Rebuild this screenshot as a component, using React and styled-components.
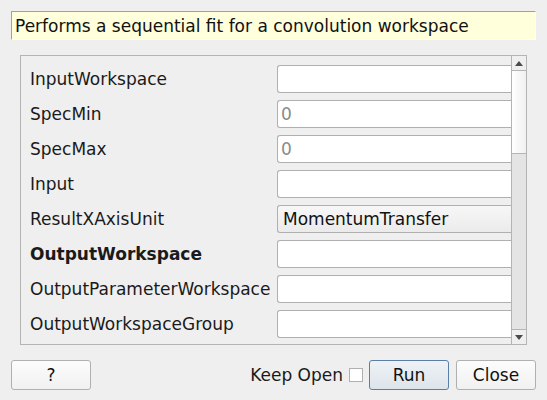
import React from "react";
import styled, { createGlobalStyle } from "styled-components";

const Global = createGlobalStyle`
  html, body {
    margin: 0;
    padding: 0;
    background: #efefef;
  }
  body {
    font-family: "DejaVu Sans", "Liberation Sans", sans-serif;
    font-size: 17px;
    color: #1a1a1a;
  }
`;

const Dialog = styled.div`
  width: 547px;
  height: 400px;
  box-sizing: border-box;
  padding: 11px 11px 10px 11px;
  display: flex;
  flex-direction: column;
`;

const Description = styled.div`
  height: 29px;
  box-sizing: border-box;
  background: #ffffdc;
  border-top: 1px solid #a0a0a0;
  border-left: 1px solid #a0a0a0;
  border-bottom: 1px solid #ffffff;
  border-right: 1px solid #ffffff;
  padding: 0 4px 0 3px;
  display: flex;
  align-items: center;
  white-space: nowrap;
  color: #111;
`;

const Panel = styled.div`
  margin: 15px 9px 0 9px;
  height: 290px;
  box-sizing: border-box;
  border: 1px solid #b4b4b4;
  display: flex;
  overflow: hidden;
`;

const Form = styled.div`
  flex: 1;
  padding: 9px 0 0 9px;
  display: flex;
  flex-direction: column;
  gap: 7px;
  overflow: hidden;
`;

const Row = styled.div`
  display: grid;
  grid-template-columns: 247px 1fr;
  align-items: center;
  height: 28px;
  flex-shrink: 0;
`;

const Label = styled.div`
  font-weight: ${(p) => (p.$bold ? "bold" : "normal")};
  white-space: nowrap;
`;

const Field = styled.div`
  height: 28px;
  box-sizing: border-box;
  border: 1px solid #b0b0b0;
  border-right: none;
  border-radius: 3px 0 0 3px;
  background: ${(p) =>
    p.$combo ? "linear-gradient(#f7f7f7, #ebebeb)" : "#ffffff"};
  color: ${(p) => (p.$placeholder ? "#8a8a8a" : "#111")};
  padding-left: ${(p) => (p.$combo ? "5px" : "3px")};
  display: flex;
  align-items: center;
  white-space: nowrap;
`;

const ScrollBar = styled.div`
  width: 14px;
  border-left: 1px solid #b4b4b4;
  display: flex;
  flex-direction: column;
  background: #e4e4e4;
`;

const Arrow = styled.div`
  height: 14px;
  background: #efefef;
  display: flex;
  align-items: center;
  justify-content: center;
  border-${(p) => (p.$down ? "top" : "bottom")}: 1px solid #b4b4b4;
`;

const Handle = styled.div`
  height: 82px;
  background: linear-gradient(to right, #ffffff, #f0f0f0);
  border-bottom: 1px solid #b4b4b4;
`;

const Track = styled.div`
  flex: 1;
`;

const Footer = styled.div`
  margin-top: 15px;
  display: flex;
  align-items: center;
  height: 30px;
`;

const Button = styled.button`
  width: 80px;
  height: 30px;
  box-sizing: border-box;
  font-family: inherit;
  font-size: 17px;
  color: #111;
  border-radius: 3px;
  border: 1px solid ${(p) => (p.$default ? "#5a7fa6" : "#b0b0b0")};
  background: ${(p) =>
    p.$default
      ? "linear-gradient(#eef2f6, #dde4ea)"
      : "linear-gradient(#fcfcfc, #f1f1f1)"};
  padding: 0;
  margin-left: ${(p) => p.$gap || "0"};
`;

const Spacer = styled.div`
  flex: 1;
`;

const KeepOpen = styled.span`
  white-space: nowrap;
`;

const Check = styled.span`
  width: 14px;
  height: 14px;
  box-sizing: border-box;
  border: 1px solid #b0b0b0;
  background: #fff;
  margin-left: 6px;
  margin-right: 6px;
`;

const rows = [
  { label: "InputWorkspace" },
  { label: "SpecMin", value: "0", placeholder: true },
  { label: "SpecMax", value: "0", placeholder: true },
  { label: "Input" },
  { label: "ResultXAxisUnit", value: "MomentumTransfer", combo: true },
  { label: "OutputWorkspace", bold: true },
  { label: "OutputParameterWorkspace" },
  { label: "OutputWorkspaceGroup" },
];

const Tri = ({ down }) => (
  <svg width="8" height="5" viewBox="0 0 8 5">
    <polygon
      points={down ? "0,0 8,0 4,5" : "0,5 8,5 4,0"}
      fill="#4a4a4a"
    />
  </svg>
);

export default function App() {
  return (
    <Dialog>
      <Global />
      <Description>Performs a sequential fit for a convolution workspace</Description>
      <Panel>
        <Form>
          {rows.map((r) => (
            <Row key={r.label}>
              <Label $bold={r.bold}>{r.label}</Label>
              <Field $combo={r.combo} $placeholder={r.placeholder}>
                {r.value}
              </Field>
            </Row>
          ))}
        </Form>
        <ScrollBar>
          <Arrow>
            <Tri />
          </Arrow>
          <Handle />
          <Track />
          <Arrow $down>
            <Tri down />
          </Arrow>
        </ScrollBar>
      </Panel>
      <Footer>
        <Button>?</Button>
        <Spacer />
        <KeepOpen>Keep Open</KeepOpen>
        <Check />
        <Button $default>Run</Button>
        <Button $gap="7px">Close</Button>
      </Footer>
    </Dialog>
  );
}
